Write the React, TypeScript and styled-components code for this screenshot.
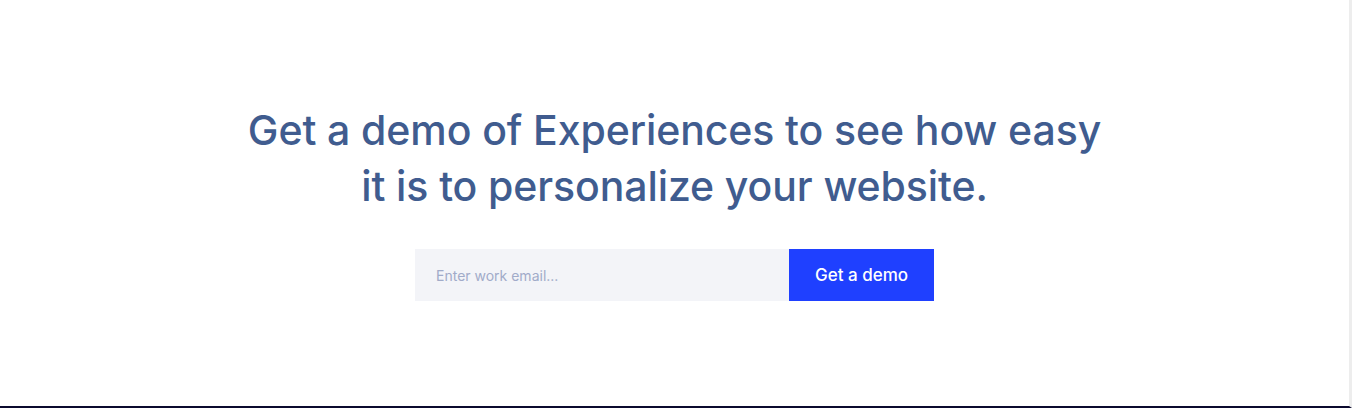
import React from 'react';
import styled, { createGlobalStyle } from 'styled-components';

const GlobalStyle = createGlobalStyle`
    html, body {
        margin: 0;
        padding: 0;
        background: #ffffff;
    }
`;

const Page = styled.div`
    width: 1349px;
    height: 304px;
    padding-top: 102px;
    box-sizing: content-box;
    border-right: 3px solid #ededed;
    border-bottom: 2px solid #0b0a2e;
    background: #ffffff;
    display: flex;
    flex-direction: column;
    align-items: center;
    font-family: 'Inter', 'Lato', 'Liberation Sans', sans-serif;
`;

const Heading = styled.h2`
    margin: 0;
    width: 900px;
    text-align: center;
    font-size: 41px;
    line-height: 56px;
    font-weight: 500;
    letter-spacing: -0.1px;
    color: #405c8f;
`;

const Form = styled.form`
    display: flex;
    margin-top: 35px;
`;

const EmailInput = styled.input`
    width: 374px;
    height: 52px;
    box-sizing: border-box;
    border: none;
    outline: none;
    background: #f3f4f8;
    padding: 0 21px;
    font-family: inherit;
    font-size: 14px;
    color: #405c8f;

    &::placeholder {
        color: #a1abc9;
    }
`;

const SubmitButton = styled.button`
    width: 145px;
    height: 52px;
    border: none;
    background: #1f40ff;
    color: #ffffff;
    font-family: inherit;
    font-size: 17px;
    font-weight: 500;
    cursor: pointer;
`;

export default function App() {
    return (
        <>
            <GlobalStyle />
            <Page>
                <Heading>
                    Get a demo of Experiences to see how easy
                    <br />
                    it is to personalize your website.
                </Heading>
                <Form onSubmit={(e) => e.preventDefault()}>
                    <EmailInput type="email" placeholder="Enter work email..." />
                    <SubmitButton type="submit">Get a demo</SubmitButton>
                </Form>
            </Page>
        </>
    );
}
